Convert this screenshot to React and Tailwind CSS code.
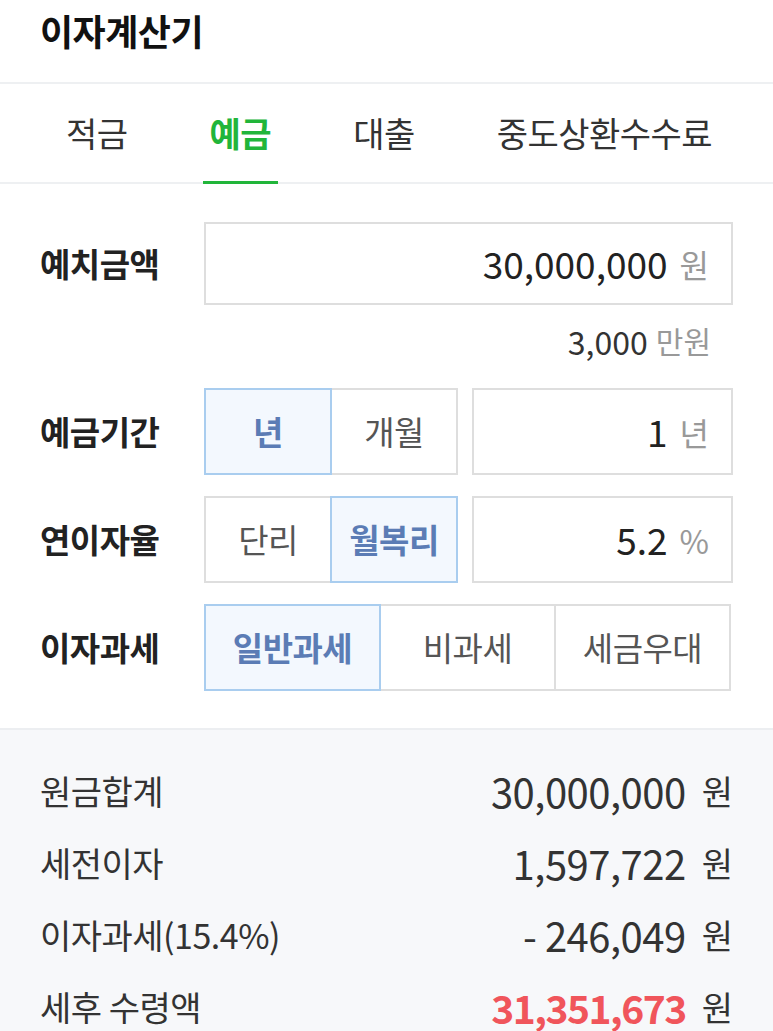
import { useState } from "react";

const font = { fontFamily: '"Noto Sans CJK KR", "Noto Sans", sans-serif' };

function Seg({ items, active, onPick, widths }) {
    return (
        <div className="flex">
            {items.map((label, i) => {
                const on = i === active;
                return (
                    <button
                        key={label}
                        onClick={() => onPick(i)}
                        className={`${widths} h-[87px] flex items-center justify-center text-[33px] tracking-[-0.5px] border-2 -ml-[2px] first:ml-0 ${
                            on
                                ? "bg-[#f3f8fe] border-[#a9cdef] text-[#5b7cb5] font-bold z-10"
                                : "bg-white border-[#dedede] text-[#555]"
                        }`}
                    >
                        {label}
                    </button>
                );
            })}
        </div>
    );
}

function ValueBox({ value, unit }) {
    return (
        <div className="w-[261px] h-[87px] border-2 border-[#dedede] bg-white flex items-center justify-end pr-[22px] gap-[12px]">
            <span className="text-[37px] text-[#222]">{value}</span>
            <span className="text-[32px] text-[#999]">{unit}</span>
        </div>
    );
}

function Row({ label, children }) {
    return (
        <div className="flex items-center">
            <div className="w-[164px] text-[33px] font-bold text-[#222] tracking-[-0.5px]">
                {label}
            </div>
            {children}
        </div>
    );
}

function App() {
    const [tab, setTab] = useState(1);
    const [period, setPeriod] = useState(0);
    const [rateType, setRateType] = useState(1);
    const [tax, setTax] = useState(0);

    const tabs = ["적금", "예금", "대출", "중도상환수수료"];

    const results = [
        ["원금합계", "30,000,000", false],
        ["세전이자", "1,597,722", false],
        ["이자과세(15.4%)", "- 246,049", false],
        ["세후 수령액", "31,351,673", true],
    ];

    return (
        <div className="w-[773px] h-[1031px] overflow-hidden bg-white" style={font}>
            <div className="h-[84px] flex items-start pl-10 pt-[4px] border-b-2 border-[#eef0f2]">
                <h1 className="text-[36px] font-bold text-[#111] tracking-[-0.5px] leading-[52px]">
                    이자계산기
                </h1>
            </div>

            <div className="h-[100px] flex pl-[59px] gap-[68px] border-b-2 border-[#eef0f2]">
                {tabs.map((t, i) => (
                    <button
                        key={t}
                        onClick={() => setTab(i)}
                        className={`relative px-[7px] pb-[2px] text-[34px] tracking-[-0.5px] ${
                            i === tab ? "text-[#21b53a] font-bold" : "text-[#333]"
                        }`}
                    >
                        {t}
                        {i === tab && (
                            <span className="absolute left-0 right-0 -bottom-[2px] h-[3px] bg-[#21b53a]" />
                        )}
                    </button>
                ))}
            </div>

            <div className="px-10 pt-[38px] h-[546px] border-b-2 border-[#eceef1]">
                <Row label="예치금액">
                    <div className="flex-1 h-[83px] border-2 border-[#dedede] flex items-center justify-end pr-[22px] gap-[12px]">
                        <span className="text-[37px] text-[#222]">30,000,000</span>
                        <span className="text-[32px] text-[#999]">원</span>
                    </div>
                </Row>
                <div className="h-[83px] flex items-center justify-end pr-[22px] pb-[12px] gap-[8px]">
                    <span className="text-[32px] text-[#333]">3,000</span>
                    <span className="text-[30px] text-[#999]">만원</span>
                </div>

                <div className="flex flex-col gap-[21px]">
                    <Row label="예금기간">
                        <Seg
                            items={["년", "개월"]}
                            active={period}
                            onPick={setPeriod}
                            widths="w-[128px]"
                        />
                        <div className="ml-[14px]">
                            <ValueBox value="1" unit="년" />
                        </div>
                    </Row>
                    <Row label="연이자율">
                        <Seg
                            items={["단리", "월복리"]}
                            active={rateType}
                            onPick={setRateType}
                            widths="w-[128px]"
                        />
                        <div className="ml-[14px]">
                            <ValueBox value="5.2" unit="%" />
                        </div>
                    </Row>
                    <Row label="이자과세">
                        <Seg
                            items={["일반과세", "비과세", "세금우대"]}
                            active={tax}
                            onPick={setTax}
                            widths="w-[177px]"
                        />
                    </Row>
                </div>
            </div>

            <div className="bg-[#f7f8fa] px-10 pt-[25px] h-full">
                {results.map(([label, value, hi]) => (
                    <div key={label} className="h-[72px] flex items-center justify-between">
                        <span className="text-[34px] text-[#333] tracking-[-0.5px] leading-[44px]">
                            {label}
                        </span>
                        <div className="flex items-center gap-[16px]">
                            <span
                                className={`leading-[44px] ${
                                    hi
                                        ? "text-[39px] tracking-[-1.5px] text-[#f0555b] font-bold"
                                        : "text-[40px] tracking-[-0.5px] text-[#333]"
                                }`}
                            >
                                {value}
                            </span>
                            <span className="text-[34px] text-[#333] leading-[44px]">원</span>
                        </div>
                    </div>
                ))}
            </div>
        </div>
    );
}

export default App;
